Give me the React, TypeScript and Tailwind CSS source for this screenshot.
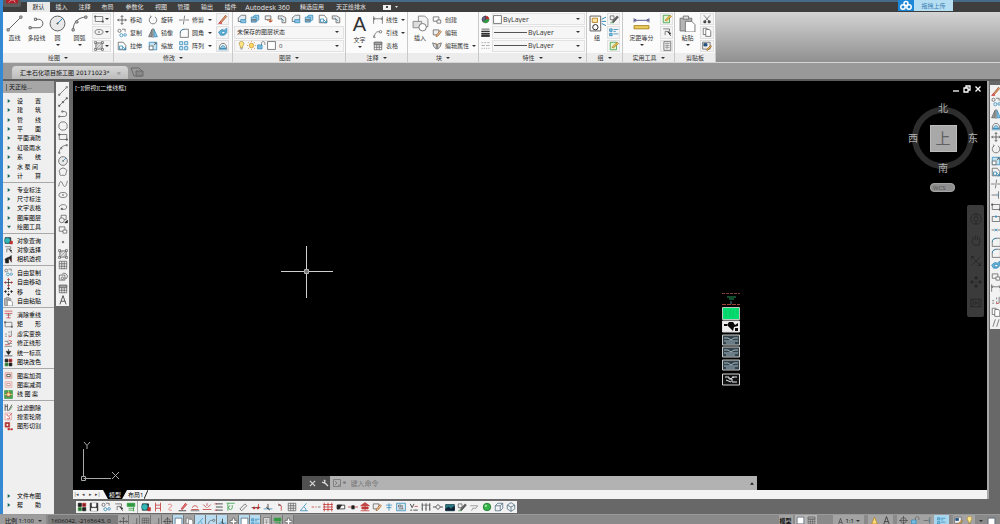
import React from "react";

const K = "#5c5c5c";
const B = "#2b87b8";
const R = "#c22f2f";
const G = "#2f9a3f";
const D = "#1f1f1f";

type Stroke = [d: string, stroke: string, fill?: string];

const ICONS: Record<string, Stroke[]> = {
  line: [["M2 14 14 2", K], ["M1 13h2v2H1zM13 1h2v2h-2z", K, "#fff"]],
  xline: [["M2 14 14 2", K], ["M1 13h2v2H1zM7 7h2v2H7zM13 1h2v2h-2z", K, K]],
  pline: [["M1 12h9a4 4 0 0 0 0-8H8", K], ["M1 11h2v2H1zM6 3h2v2H6z", K, "#fff"]],
  polygon: [["M5 1.500h6L14.500 5v6L11 14.500H5L1.500 11V5z", K]],
  circle: [["M8 1a7 7 0 1 0 0 14A7 7 0 1 0 8 1", K, "#e9e9e9"], ["M8 8l5-5", B], ["M7.500 7.500h1v1h-1z", K, K]],
  arc: [["M2 14C2 6 8 2 14 2", K], ["M1 13h2v2H1zM4.500 5.500h2v2h-2zM13 1h2v2h-2z", K, "#fff"]],
  rect: [["M2 4h12v8H2z", K], ["M1 3h2v2H1zM13 11h2v2h-2z", K, K]],
  cloud: [["M4 3q4-3 8 0 4 3 1 6 0 6-5 4-6 2-5-3-3-4 1-7z", K]],
  spline: [["M1 12C4-3 7 7 8 9s4 8 7-6", K]],
  ellipse: [["M8 4a6.500 4 0 1 0 0 8 6.500 4 0 1 0 0-8", K], ["M7.500 7.500h1v1h-1z", K, K]],
  earc: [["M2 8c1-5 12-5 12 0 0 4-6 5-8 3", K], ["M5 10h2v2H5z", K, K]],
  block: [["M5 2h8v7H5z", K], ["M6 6a4 4 0 1 0 0 8 4 4 0 1 0 0-8", K, "#eee"], ["M11 14h4v-4z", D, D]],
  mkblock: [["M2 3h9v7H2z", K], ["M8 8h6v5H8z", K, "#fff"]],
  point: [["M7 7h2v2H7z", K, K]],
  hatch: [["M3 3h10v10H3z", K, "#ddd"], ["M3 8l5-5M3 13 13 3M8 13l5-5", "#999"], ["M1 1h3v3H1zM12 1h3v3h-3zM1 12h3v3H1zM12 12h3v3h-3z", K, "#fff"]],
  region: [["M2 5h9v8H2zM6 4a5 5 0 0 1 8 6h-3", K], ["M7 8a2 2 0 1 0 0 4 2 2 0 1 0 0-4", K]],
  table: [["M2 2h12v12H2zM2 6h12M6 6v8M10 6v8M2 10h12", K], ["M2 2h12v3H2z", K, "#bbb"]],
  textA: [["M3 15 8 1l5 14M5 10h6", D]],
  move: [["M8 1v14M1 8h14M6 3l2-2 2 2M6 13l2 2 2-2M3 6 1 8l2 2M13 6l2 2-2 2", "#444"]],
  rotate: [["M5 3a6 6 0 1 0 6 0M5 3 4 1M5 3 3 4", K], ["M8 8h.5", B]],
  trim: [["M0 8h6M10 8h6M9 1 7 15", K]],
  copy: [["M4 2a2.500 2.500 0 1 0 0 5 2.500 2.500 0 1 0 0-5M8 2h5v4", K], ["M7 9a2.500 2.500 0 1 0 0 5 2.500 2.500 0 1 0 0-5M13 9a2 2 0 1 0 0 4 2 2 0 1 0 0-4", B]],
  mirror: [["M6.500 2v12H1z", K, "#999"], ["M9.500 2v12H15z", B, "#8cc5e3"], ["M8 0v16", K]],
  fillet: [["M2 15V8c0-4 3-6 7-6h6v13z", K], ["M2 8c0-4 3-6 7-6", B]],
  stretch: [["M2 2h8l4 5v7H2z", K], ["M4 8h5v5H4zM9 9l5 5M14 10v4h-4", B]],
  scale: [["M2 2h12v12H2z", B, "#c5e2f1"], ["M2 8h6v6H2z", K, "#fff"], ["M9 7l4-4M10 3h3v3", K]],
  array: [["M1 1h5v5H1zM9 1h5v5H9zM1 9h5v5H1zM9 9h5v5H9z", B, "#d4e9f4"]],
  erase: [["M3 13 12 2l2 2-9 10z", "#9a4c2d", "#e3a06a"], ["M1 15h5l-2-3z", R, "#e88"]],
  explode: [["M1 8l5-4 4 1 4-3v7l-4 4H4z", B, "#6db4da"], ["M6 7h5v4H6z", B, "#fff"]],
  offset: [["M2 12c0-11 12-11 12 0z", K], ["M4 12c1-6 7-6 8 0zM1 14h14", B, "#9dcde6"]],
  extend: [["M1 8h9M12 2v12", K], ["M10 6l2 2-2 2", B]],
  brk: [["M2 4h4M10 4h4v8H2V4", K], ["M7 3h2v2H7z", B, B]],
  join: [["M1 8h5M10 8h5", K], ["M6 6l2 2-2 2M10 6 8 8l2 2", B]],
  layer: [["M2 6l5-4h7v6l-5 4H2z", K, "#e3eef5"], ["M6 9h8v5H6z", B, "#8fc4e2"]],
  layer2: [["M2 5h8v8H2zM5 5l2-3h7v7l-3 3", B, "#9bcbe5"], ["M2 9h8M2 11h8", K]],
  layer3: [["M2 3h9v6H2z", K, "#eee"], ["M5 10h9M10 7v7", "#bc682b"], ["M8 12h5", R]],
  layer4: [["M2 3h7l5 3v8H8V8H2z", K, "#e8e8e8"], ["M6 6l5 5", B]],
  bulb: [["M8 1c-5 0-5 5-2 8v3h4V9c3-3 3-8-2-8z", "#a78832", "#ffe789"], ["M6 14h4", K]],
  sun: [["M8 4a4 4 0 1 0 0 8 4 4 0 1 0 0-8", "#c8902c", "#ffd866"], ["M8 0v2M8 14v2M0 8h2M14 8h2M2 2l2 2M12 12l2 2M14 2l-2 2M4 12l-2 2", "#c8902c"]],
  unlock: [["M1 7h8v7H1z", B, "#7cbbdd"], ["M8 7V4c0-4 6-4 6 0v3", K]],
  swatch: [["M1 1h14v14H1z", "#444", "#fff"]],
  dim: [["M1 2v12M15 2v12M1 6h14M3 4 1 6l2 2M13 4l2 2-2 2", K]],
  leader: [["M2 14C4 5 7 6 10 6", K], ["M12 4a2 2 0 1 0 0 4 2 2 0 1 0 0-4M1 12v3h3", K]],
  insert: [["M6 1h6l3 3v7H6z", "#888", "#f3f3f3"], ["M1 6h8v6H1z", "#888", "#ddd"], ["M10 8a3.500 3.500 0 1 0 0 7 3.500 3.500 0 1 0 0-7", "#777", "#fff"]],
  edit: [["M2 3h9v8H2z", K, "#eee"], ["M6 13l7-9 2 2-7 8z", "#96602f", "#ffd1a1"]],
  attr: [["M1 3l6 2v8L3 9zM15 3 9 5v8l4-4z", K, "#ddd"], ["M6 3l3 4", "#c47b31"]],
  wheel: [["M8 2a6 6 0 1 0 0 12A6 6 0 1 0 8 2", K, "#ddd"], ["M8 8V2a6 6 0 0 1 6 6z", R, R], ["M8 8h6a6 6 0 0 1-10 4z", G, G], ["M8 8 3 11A6 6 0 0 1 8 2z", "#335", "#668"]],
  weight: [["M1 2h14", D], ["M1 5.500h14v1H1z", D, D], ["M1 9.500h14v1.500H1zM1 13h14v2H1z", D, D]],
  ltype: [["M1 3h3M6 3h3M11 3h4M1 8h6M9 8h6M1 13h2M5 13h2M9 13h2M13 13h2", "#888"]],
  group: [["M1 1h10v14H1z", K, "#fff"], ["M3 3h5v4H3z", "#b7862f", "#ffe5a0"], ["M6 9a2.500 2.500 0 1 0 0 5 2.500 2.500 0 1 0 0-5", D], ["M12 4l4-2M12 8l4 2M12 6h4", B]],
  pen: [["M2 3h6v6H2z", K], ["M5 12 13 3l2 2-8 9z", K, K], ["M2 14h5", G]],
  list: [["M1 3h4v4H1zM1 10h4v4H1z", B, "#8ec6e4"], ["M7 4h8M7 7h4M7 11h8", B]],
  measure: [["M1 3v4M15 3v4M1 5h14M3 4 1 5l2 1M13 4l2 1-2 1", "#558"], ["M1 10h14v3H1z", "#aa8320", "#ecd05f"]],
  qsel: [["M2 2h10v12H2z", G, "#e6f3cf"], ["M5 10l8-8 2 2-8 7z", "#956b20", "#ffcf50"]],
  calc: [["M3 1h11v14H3z", K, "#eee"], ["M5 4h7M5 7h7M5 10h7M8 6v7", "#888"]],
  paste: [["M1 3h11v12H1z", "#777", "#b5b5b5"], ["M4 1h5v3H4z", "#777", "#ddd"], ["M6 6h6l3 3v7H6z", "#777", "#fff"]],
  cut: [["M3 2l8 9M13 2 5 11", K], ["M3 11h3v3H3zM10 11h3v3h-3z", D, "#777"]],
  pages: [["M2 2h6l2 2v8H2z", K, "#fff"], ["M6 4h6l2 3v8H6z", K, "#fff"]],
  props: [["M1 2h12v11H1z", K, "#eee"], ["M3 4h5v4H3z", "#24527d", "#24527d"], ["M7 14l7-7 1 2-6 6z", "#96602f", "#f0c050"]],
  globe: [["M2 3h10v10H2z", D, "#222"], ["M6 3a5 5 0 1 0 0 10A5 5 0 1 0 6 3", "#187c88", "#34b7b5"], ["M11 9h4v5h-4z", R, R]],
  select: [["M2 3h10v4H5v6", K], ["M9 8l5 2-2 1 2 3", D, D]],
  camera: [["M2 7l6-3v10H3zM8 5l5-4v12", D, D], ["M10 8l4 2", R]],
  redmove: [["M8 1v14M1 8h14", D], ["M6 3l2-2 2 2M6 13l2 2 2-2M3 6 1 8l2 2M13 6l2 2-2 2", R, R]],
  fourway: [["M8 1v4M8 11v4M1 8h4M11 8h4M7 8h2", D], ["M6 3l2-2 2 2zM6 13l2 2 2-2zM3 6 1 8l2 2zM13 6l2 2-2 2z", D, D]],
  tee: [["M1 2h14M1 6h14M8 6v8M4 14h8", R], ["M4 9h8", K]],
  dashes: [["M2 13h3M2 9h3M9 13v-3M9 7V4M13 13V3", K], ["M8 14l5-1", R]],
  zig: [["M1 4h6v4h7M1 13h13", K], ["M8 2l6 2-4 3M2 10h8", R]],
  level: [["M1 14h14M8 2v4", D], ["M4 6h8l-4 6z", D, D]],
  blocks: [["M2 2h5v5H2zM9 9h5v5H9z", D, D], ["M9 2h5v5H9z", R, "#722"], ["M2 9h5v5H2z", G, "#363"]],
  hole: [["M2 3h12v10H2z", "#d58a84", "#f4dcd6"], ["M5 6h6v4H5z", D, "#fff"]],
  unhole: [["M2 3h12v10H2z", "#d9a09a", "#f7e7e3"], ["M5 6h6v4H5z", "#b77", "#fff"]],
  pattern: [["M1 1h14v14H1z", G, "#4ca45a"], ["M5 5h6v6H5z", R, "#fff2aa"], ["M1 8h4M11 8h4M8 1v4", "#ffe56b"]],
  filter: [["M2 2v12M2 6h4M6 2v12M8 14l6-11", D], ["M10 13l5-7", G]],
  contour: [["M2 2h11v12H2z", "#d88", "#fff"], ["M4 5h3v3M10 9v3H5M14 2l-6 7", R]],
  shapecut: [["M2 1h8v8H2z", R, "#a33"], ["M5 4h2v2H5z", "#fff", "#fff"], ["M7 11h3v3H7zM12 12h3v2h-3z", R, R]],
  save: [["M2 2h12v12H2z", D, "#333"], ["M5 2h6v5H5zM4 10h8v4H4z", "#fff", "#fff"]],
  green: [["M2 2h12v5H2z", G, G], ["M4 10h9M4 13h9M12 8v7", G]],
  ladder: [["M4 1v14M12 1v14", R], ["M4 5h8M4 10h8", R]],
  hook: [["M5 4c7-2 7 3 3 5s-2 5 3 4", "#d66"]],
  slope: [["M5 11 12 2l2 2-7 8z", R, "#d77"], ["M1 14h12", D]],
  roof: [["M2 12h12M4 9c0-4 8-4 8 0", R], ["M1 14h14", K]],
  spread: [["M2 4l5 5M14 4 9 9", R], ["M1 12h14M8 2v4", R]],
  rows: [["M3 3h11M3 8h11M3 13h11", D], ["M1 3h4M1 13h4", R]],
  pipe: [["M1 2h13M3 2v12", G], ["M7 6a3 3 0 1 0 3 3M10 5v4", G]],
  tube: [["M3 11 11 3l3 3-8 8z", K, "#eee"]],
  nodes: [["M1 9h14", D], ["M4 8h2v3H4zM10 8h2v3h-2z", R, R], ["M12 3v6", R]],
  valve: [["M1 11h14", B], ["M5 8l6 5M8 3v8", D]],
  tap: [["M5 3l5 3v8", R], ["M5 5h4", D]],
  grid: [["M2 2h12v12H2zM2 6h12M2 10h12M6 2v12M10 2v12", K]],
  redgrid: [["M2 1v14M8 1v14M14 1v14", R], ["M0 4h16M0 8h16M0 12h16", R]],
  dotline: [["M1 8h4M7 8h2", R], ["M11 8h4", K]],
  half: [["M2 5h12v6H2z", D, "#fff"], ["M2 5h7l-4 6H2z", D, D]],
  center: [["M0 8h5M11 8h5", R], ["M6 6h4v5H6z", D, D]],
  house: [["M1 6 8 1l7 5zM3 8h10v3H3z", R, "#b84848"], ["M1 14h14M8 6v8", R]],
  pillar: [["M8 2v12M3 5h10M4 9h8", B]],
  room: [["M1 2h14v12H1z", B, "#dcebf4"], ["M4 5h4v3H4zM10 5v6M4 11h8", K]],
  ticks: [["M2 2v12M8 2v12M14 2v12", D], ["M1 11h2M7 11h2M13 11h2M1 5h14", K]],
  vdot: [["M2 3l3 6 3-6M2 13h3M7 13h7", D], ["M9 7h5", R]],
  diamond: [["M0 8h4M12 8h4M8 4l4 4-4 4-4-4z", D]],
  steps: [["M2 6h12l-3 4H6L4 14", "#888"]],
  photo: [["M1 4h14v10H1z", "#1a4148", "#2a7a86"], ["M1 11l5-3 3 3 6-4v6H1z", "#123", "#123"]],
  ball: [["M8 2a6 6 0 1 0 0 12A6 6 0 1 0 8 2", "#166f25", "#35b44a"], ["M5 5h2v2H5z", "#aef2b8", "#aef2b8"]],
  cube: [["M2 6l4-4h8v8l-4 4H2zM2 6h8v8M10 6l4-4", "#45687c"]],
  hex: [["M8 1l6 4v6l-6 4-6-4V5zM8 15V8L2 5M8 8l6-3", "#45687c"]],
  slashes: [["M3 14 7 2M9 14l4-12", K]],
  plus: [["M6 2h4v4h4v4h-4v4H6v-4H2V6h4z", "#555", "#fff"]],
  ell: [["M12 2v11H4", "#444"]],
  angle: [["M2 14 12 2M2 14h12M8 8c3 2 3 4 3 6", B]],
  target: [["M8 3a5 5 0 1 0 0 10A5 5 0 1 0 8 3M8 0v16M0 8h16", "#444"]],
  box: [["M2 2h12v12H2z", "#456", "#fff"]],
  flame: [["M8 2l5 12H3z", "#b77c22", "#ffdf79"]],
  hand: [["M4 8V4M7 8V2M10 8V3M13 9V5M4 8l-2 2 4 5h6l1-6", D]],
  wheelnav: [["M8 1a7 7 0 1 0 0 14A7 7 0 1 0 8 1M8 5a3 3 0 1 0 0 6 3 3 0 1 0 0-6M8 1v4M8 11v4", D]],
  zoomx: [["M2 2l12 12M14 2 2 14M2 6V2h4M14 10v4h-4", D]],
  film: [["M1 3h14v10H1zM4 3v10M12 3v10M7 6l3 2-3 2z", D]],
};

function Icon({ n, c = "size-3", w = 1.2 }: { n: string; c?: string; w?: number }) {
  return (
    <svg viewBox="0 0 16 16" className={`shrink-0 ${c}`} fill="none" strokeWidth={w} aria-hidden="true">
      {ICONS[n].map(([d, s, f], i) => (
        <path key={i} d={d} stroke={s} fill={f ?? "none"} />
      ))}
    </svg>
  );
}

function Caret({ c = "" }: { c?: string }) {
  return (
    <svg viewBox="0 0 4 2" className={`h-[2px] w-1 shrink-0 ${c}`} aria-hidden="true">
      <path d="M0 0h4L2 2z" fill="#333" />
    </svg>
  );
}

function Panel({ title, w, caret = true, corner = false, children }: { title: string; w: string; caret?: boolean; corner?: boolean; children: React.ReactNode }) {
  return (
    <section className={`flex shrink-0 flex-col border-r border-[#c9c9c9] bg-[#fbfbfb] ${w}`}>
      <div className="flex flex-1 items-stretch py-px">{children}</div>
      <h2 className="relative flex h-[9px] items-center justify-center gap-1 bg-[#ececec] text-[6px] leading-none text-[#333]">
        {title}
        {caret && <Caret />}
        {corner && <span className="absolute right-1"><Caret /></span>}
      </h2>
    </section>
  );
}

function Big({ n, label, w, size = "size-[17px]", caret = false }: { n: string; label: string; w: string; size?: string; caret?: boolean }) {
  return (
    <button className={`flex shrink-0 flex-col items-center pt-0.5 ${w}`}>
      <Icon n={n} c={size} w={0.9} />
      <span className="mt-0.5 text-[6px] leading-[8px]">{label}</span>
      {caret && <Caret c="mt-0.5" />}
    </button>
  );
}

function Col({ items, w, carets = [] }: { items: [string, string][]; w: string; carets?: number[] }) {
  return (
    <div className={`grid shrink-0 grid-rows-3 ${w}`}>
      {items.map(([n, t], i) => (
        <button key={n + t} aria-label={t || n} className="flex items-center gap-[3px] text-[6px] leading-none">
          <Icon n={n} c="size-[10px]" />
          {t && <span className="whitespace-nowrap">{t}</span>}
          {carets.includes(i) && <Caret c="ml-auto" />}
        </button>
      ))}
    </div>
  );
}

function Boxes({ items, w }: { items: string[]; w: string }) {
  return (
    <div className={`grid shrink-0 grid-rows-3 gap-px ${w}`}>
      {items.map((n) => (
        <button key={n} aria-label={n} className="flex items-center justify-center border border-[#e0e0e0] bg-[#f4f4f4]">
          <Icon n={n} c="size-[10px]" />
        </button>
      ))}
    </div>
  );
}

function Combo({ label, value, pad = "pl-1", text = "text-[6px]" }: { label: string; value: string; pad?: string; text?: string }) {
  return (
    <div className="relative flex min-w-0 flex-1 items-center self-stretch">
      <select aria-label={label} className={`h-full w-full appearance-none leading-none outline-none ${text} ${pad}`}>
        <option>{value}</option>
      </select>
      <Caret c="pointer-events-none absolute right-1" />
    </div>
  );
}

const MENU = ["默认", "插入", "注释", "布局", "参数化", "视图", "管理", "输出", "插件", "Autodesk 360", "精选应用", "天正给排水"];
const MENU_W = ["w-[23px]", "w-[23px]", "w-[23px]", "w-[23px]", "w-[31px]", "w-[22px]", "w-[23px]", "w-[24px]", "w-[23px]", "w-[51px]", "w-[38px]", "w-[40px]"];

type Row = [icon: string, text: string];
const GROUPS: { h: string; rows: Row[] }[] = [
  { h: "h-[85px]", rows: [["", "设　　置"], ["", "建　　筑"], ["", "管　　线"], ["", "平　　面"], ["", "平面消防"], ["", "虹吸雨水"], ["", "系　　统"], ["", "水 泵 间"], ["", "计　　算"]] },
  { h: "h-[47px]", rows: [["", "专业标注"], ["", "尺寸标注"], ["", "文字表格"], ["", "图库图层"], ["open", "绘图工具"]] },
  { h: "h-[28px]", rows: [["globe", "对象查询"], ["select", "对象选择"], ["camera", "相机透视"]] },
  { h: "h-[38px]", rows: [["copy", "自由复制"], ["redmove", "自由移动"], ["fourway", "移　　位"], ["paste", "自由粘贴"]] },
  { h: "h-[57px]", rows: [["tee", "消除重线"], ["rect", "矩　　形"], ["dashes", "虚实变换"], ["zig", "修正线形"], ["level", "统一标高"], ["blocks", "图块改色"]] },
  { h: "h-[28px]", rows: [["hole", "图案加洞"], ["unhole", "图案减洞"], ["pattern", "线 图 案"]] },
  { h: "h-[28px]", rows: [["filter", "过滤删除"], ["contour", "搜索轮廓"], ["shapecut", "图形切割"]] },
];

function SideRow({ n, t }: { n: string; t: string }) {
  return (
    <button className="flex items-center text-left">
      <span className="flex w-[14px] shrink-0 items-center pl-px">
        {n === "" || n === "open" ? (
          <svg viewBox="0 0 6 6" className="ml-[3px] size-1" aria-hidden="true">
            <path d={n ? "M0 1h6L3 5z" : "M1 0v6l4-3z"} fill="#17685f" />
          </svg>
        ) : (
          <Icon n={n} c="size-[9px]" />
        )}
      </span>
      <span className="whitespace-pre text-[6px] leading-none text-black">{t}</span>
    </button>
  );
}

const LEFT_TOOLS = ["line", "xline", "pline", "polygon", "rect", "arc", "circle", "cloud", "spline", "ellipse", "earc", "block", "mkblock", "point", "hatch", "grid", "region", "table", "textA"];
const RIGHT_TOOLS = ["erase", "copy", "mirror", "offset", "move", "rotate", "scale", "stretch", "trim", "extend", "rect", "brk", "join", "fillet", "fillet", "explode", "mkblock", "dim", "dashes", "pages", "slashes"];
const BOTTOM_A = ["blocks", "save", "copy", "select", "green"];
const BOTTOM_B = ["globe", "ladder", "hook", "slope", "roof", "spread", "rows", "pipe", "tube", "nodes", "valve", "tap", "grid", "angle", "dotline", "redgrid", "half", "center", "house", "edit", "pillar", "room", "vdot", "ticks", "diamond", "photo", "pen", "steps", "ball", "cube", "hex"];
const STATUS: [string, boolean][] = [["move", false], ["ell", false], ["grid", false], ["ell", false], ["target", false], ["box", true], ["pages", false], ["angle", true], ["leader", true], ["valve", true], ["plus", false], ["box", true], ["list", true], ["calc", false], ["green", false], ["plus", false]];

function Ribbon() {
  return (
    <div className="flex h-[51px] shrink-0 overflow-hidden border-b border-[#d6d6d6] bg-linear-to-b from-[#d4d4d4] to-[#909090] text-[#333]">
      <Panel title="绘图" w="w-[111px]">
        <Big n="line" label="直线" w="w-[23px]" />
        <Big n="pline" label="多段线" w="w-[21px]" />
        <Big n="circle" label="圆" w="w-[21px]" caret />
        <Big n="arc" label="圆弧" w="w-[23px]" caret />
        <div className="ml-px grid w-[19px] grid-rows-3 gap-px">
          {["rect", "ellipse", "hatch"].map((n) => (
            <button key={n} aria-label={n} className="flex items-center justify-between border border-[#e0e0e0] bg-[#f4f4f4] px-px">
              <Icon n={n} c="size-[10px]" />
              <Caret />
            </button>
          ))}
        </div>
      </Panel>
      <Panel title="修改" w="w-[119px]">
        <Col w="ml-[3px] w-[31px]" items={[["move", "移动"], ["copy", "复制"], ["stretch", "拉伸"]]} />
        <Col w="w-[31px]" items={[["rotate", "旋转"], ["mirror", "镜像"], ["scale", "缩放"]]} />
        <Col w="w-[33px]" carets={[0, 1, 2]} items={[["trim", "修剪"], ["fillet", "圆角"], ["array", "阵列"]]} />
        <Boxes w="ml-1 w-[13px]" items={["erase", "explode", "offset"]} />
      </Panel>
      <Panel title="图层" w="w-[113px]">
        <div className="mx-px grid flex-1 grid-rows-3 gap-px">
          <div className="flex items-center justify-between px-[3px]">
            {["layer", "layer2", "layer3", "layer4", "layer", "layer2", "stretch", "layer4"].map((n, i) => (
              <button key={i} aria-label={`layer tool ${i + 1}`}><Icon n={n} c="size-[10px]" /></button>
            ))}
          </div>
          <div className="flex border border-[#e2e2e2] bg-[#f6f6f6]"><Combo label="图层状态" value="未保存的图层状态" pad="pl-[2px]" /></div>
          <div className="flex items-center gap-px border border-[#e2e2e2] bg-[#f6f6f6] pl-[2px]">
            <Icon n="bulb" c="size-[9px]" /><Icon n="sun" c="size-[9px]" /><Icon n="unlock" c="size-[9px]" /><Icon n="swatch" c="size-[9px]" />
            <Combo label="图层" value="0" pad="pl-[2px]" />
          </div>
        </div>
      </Panel>
      <Panel title="注释" w="w-[62px]">
        <button className="flex w-[27px] shrink-0 flex-col items-center">
          <span className="font-['Liberation_Sans',sans-serif] text-[20px] leading-[23px]">A</span>
          <span className="text-[6px] leading-[8px]">文字</span>
          <Caret c="mt-0.5" />
        </button>
        <Col w="w-[31px]" carets={[0, 1]} items={[["dim", "线性"], ["leader", "引线"], ["table", "表格"]]} />
      </Panel>
      <Panel title="块" w="w-[71px]">
        <Big n="insert" label="插入" w="w-[24px]" />
        <Col w="w-[43px]" carets={[2]} items={[["mkblock", "创建"], ["edit", "编辑"], ["attr", "编辑属性"]]} />
      </Panel>
      <Panel title="特性" w="w-[108px]" corner>
        <div className="grid flex-1 grid-rows-3 gap-px px-px">
          <div className="flex items-center gap-0.5 pl-px">
            <Icon n="wheel" c="size-[9px]" />
            <div className="flex flex-1 items-center self-stretch border border-[#e2e2e2] bg-[#f6f6f6]"><Icon n="swatch" c="size-[9px]" /><Combo label="颜色" value="ByLayer" pad="pl-px" text="text-[7px]" /></div>
          </div>
          {["weight", "ltype"].map((n) => (
            <div key={n} className="flex items-center gap-0.5 pl-px">
              <Icon n={n} c="size-[9px]" />
              <div className="flex flex-1 items-center self-stretch border border-[#e2e2e2] bg-[#f6f6f6]"><span className="ml-px h-px w-[33px] bg-[#555]" /><Combo label={n} value="ByLayer" pad="pl-px" text="text-[7px]" /></div>
            </div>
          ))}
        </div>
      </Panel>
      <Panel title="组" w="w-[36px]">
        <Big n="group" label="组" w="w-[20px]" />
        <Boxes w="w-[13px]" items={["pen", "list", "qsel"]} />
      </Panel>
      <Panel title="实用工具" w="w-[52px]">
        <Big n="measure" label="定距等分" w="w-[37px]" caret />
        <Boxes w="w-[13px]" items={["qsel", "select", "calc"]} />
      </Panel>
      <Panel title="剪贴板" w="w-[41px]" caret={false}>
        <Big n="paste" label="粘贴" w="w-[25px]" caret />
        <Boxes w="w-[14px]" items={["cut", "pages", "props"]} />
      </Panel>
    </div>
  );
}

function ViewCube() {
  return (
    <div className="absolute top-[20px] right-[9px] grid h-[74px] w-[70px] place-items-center text-[10px] leading-none text-[#b0b0b0]">
      <div className="col-start-1 row-start-1 size-[62px] rounded-full border-[6px] border-[#2d2d2d]" />
      <button className="col-start-1 row-start-1 grid size-[27px] place-items-center border border-[#bcbcbc] bg-[#a8a8a8] text-[15px] leading-none text-[#606060]">上</button>
      <span className="col-start-1 row-start-1 self-start pt-0.5">北</span>
      <span className="col-start-1 row-start-1 self-end pb-0.5">南</span>
      <span className="col-start-1 row-start-1 justify-self-start">西</span>
      <span className="col-start-1 row-start-1 justify-self-end">东</span>
    </div>
  );
}

function Sheets() {
  return (
    <svg viewBox="0 0 20 96" className="absolute top-[211px] left-[648px] h-[96px] w-5" aria-label="sheets">
      <path d="M1 1.500h18" stroke="#803c35" strokeDasharray="3 1" />
      <path d="M6 5h9M8 7h5" stroke="#24985a" />
      <path d="M10 9v3" stroke="#4b7a91" />
      <path d="M1 12.500h18" stroke="#a34134" strokeDasharray="4 1" />
      <path d="M1.500 15.500h17v12h-17z" fill="#02dd72" stroke="#b9c7bd" />
      <path d="M5 18v7M9 17v8M12 19v6M16 17v5" stroke="#11c35d" />
      <path d="M1.500 29h17v11h-17z" fill="#eee" stroke="#ddd" />
      <path d="M8 30h4l2 3 3-2v3l-4 1-1 4-3-3-3-3zM3 32h3v2H3zM14 36h3v3h-3z" fill="#080808" />
      {[43, 55, 68].map((y) => (
        <g key={y}>
          <path d={`M1.500 ${y}h17v10h-17z`} fill="#34424a" stroke="#c9cccc" />
          <path d={`M3 ${y + 3}h4l3 2 3-2h4M3 ${y + 6}h14M5 ${y + 8}h9`} stroke="#a2b9c5" fill="none" />
        </g>
      ))}
      <path d="M1.500 82h17v11h-17z" fill="#111" stroke="#d5d5d5" />
      <path d="M4 85h4v2h3v3h5M5 88l5 2M11 85h5M9 87l4-2" stroke="#e2e9ec" fill="none" />
    </svg>
  );
}

function Canvas() {
  return (
    <main className="relative min-h-0 flex-1 overflow-hidden bg-black">
      <p className="absolute top-[3px] left-[2px] text-[6px] leading-[9px] whitespace-nowrap text-[#e6e6e6]">[−][俯视][二维线框]</p>
      <div className="absolute top-1 right-[5px] flex gap-[3px]">
        {["M1 6h6", "M1 3h4v4H1zM3 3V1h4v4H5", "M1.500 1.500l5 5M6.500 1.500l-5 5"].map((d, i) => (
          <button key={d} aria-label={["最小化", "还原", "关闭"][i]}>
            <svg viewBox="0 0 8 8" className="size-2" fill="none" stroke="#fff" strokeWidth="1.3"><path d={d} /></svg>
          </button>
        ))}
      </div>
      <svg viewBox="0 0 52 52" className="absolute top-[165px] left-[208px] size-[52px]" aria-hidden="true">
        <path d="M0 25.500h52M25.500 0v52" stroke="#d0d0d0" />
        <path d="M23.500 23.500h4v4h-4z" stroke="#b0b0b0" fill="#777" />
      </svg>
      <Sheets />
      <ViewCube />
      <button className="absolute top-[102px] right-[32px] flex h-[9px] w-[25px] items-center rounded-sm border border-[#a4a4a4] bg-[#8f8f8f] px-[2px] text-[6px] leading-none text-[#505050]">WCS</button>
      <nav aria-label="导航" className="absolute top-[124px] right-[3px] flex h-[112px] w-[17px] flex-col items-center justify-around rounded-xs bg-[#3b3b3b] py-1">
        {["wheelnav", "hand", "zoomx", "fourway", "film"].map((n) => (
          <button key={n} aria-label={n} className="opacity-80"><Icon n={n} c="size-[12px]" w={1} /></button>
        ))}
      </nav>
      <svg viewBox="0 0 44 44" className="absolute bottom-[5px] left-[6px] size-[44px]" fill="none" stroke="#a9a9a9" aria-label="UCS">
        <path d="M4.500 8v27M4.500 37.500H32M2.500 35.500h4v4h-4z" />
        <path d="M5 1l3 3.500L11 1M8 4.500V8M33 31l7 7M40 31l-7 7" />
      </svg>
      <form className="absolute bottom-0 left-1/4 flex h-[14px] w-[455px] items-center bg-[#b2b2b2]">
        <div className="flex h-full w-7 items-center justify-end gap-[5px] bg-[#505050] pr-px">
          <button type="button" aria-label="关闭"><svg viewBox="0 0 8 8" className="size-[7px]" stroke="#ddd" strokeWidth="1.300"><path d="M1 1l6 6M7 1 1 7" /></svg></button>
          <button type="button" aria-label="自定义"><svg viewBox="0 0 8 8" className="size-2" stroke="#ddd" strokeWidth="1.300" fill="none"><path d="M3 3l4 4M1 3l2 1 1-2-1-1" /></svg></button>
        </div>
        <svg viewBox="0 0 14 8" className="ml-[3px] h-2 w-[14px]" fill="none" stroke="#808080" aria-hidden="true"><path d="M.5.5h7v7h-7zM2 2l2 2-2 2M5 6h2" /><path d="M10 3h3l-1.500 2z" fill="#777" /></svg>
        <input aria-label="命令" placeholder="键入命令" className="ml-1 min-w-0 flex-1 text-[7px] leading-none outline-none placeholder:text-[#777]" />
        <svg viewBox="0 0 6 4" className="mr-[3px] h-[3px] w-1"><path d="M0 4h6L3 0z" fill="#222" /></svg>
      </form>
    </main>
  );
}

export default function App() {
  return (
    <div lang="zh-CN" className="flex h-screen flex-col overflow-hidden bg-[#686868] font-['Open_Sans','Noto_Sans_CJK_SC',sans-serif]">
      <div className="flex min-h-0 flex-1">
        <div className="w-[3px] shrink-0 bg-[#3489d2]" />
        <div className="flex min-w-0 flex-1 flex-col">
          <header className="relative flex h-3 shrink-0 border-t-2 border-[#466b86] bg-[#3e3e3e] pl-6 text-[6px] leading-none text-[#e4e4e4]">
            <button aria-label="应用程序菜单" className="absolute -top-0.5 left-0 flex h-[7px] w-[18px] justify-center rounded-b-xs bg-[#5b5b5b]">
              <svg viewBox="0 0 14 6" className="h-[5px] w-[14px]" aria-hidden="true"><path d="M0 0h14v4H0z" fill="#b51b25" /><path d="M3 3l3-3h3l2 3" stroke="#e6b3b6" fill="none" /></svg>
            </button>
            {MENU.map((m, i) => (
              <button key={m} className={`flex shrink-0 items-center justify-center whitespace-nowrap ${MENU_W[i]} ${i === 0 ? "bg-[#e9e9e9] text-[#222]" : ""} ${i === 9 ? "text-[7px]" : ""}`}>{m}</button>
            ))}
            <button aria-label="显示选项" className="ml-3 flex items-center gap-1">
              <svg viewBox="0 0 8 5" className="h-[5px] w-2"><path d="M0 0h8v5H0z" fill="#eee" /><path d="M3 1h2v2H3z" fill="#444" /></svg>
              <svg viewBox="0 0 6 4" className="h-[2px] w-[3px]"><path d="M0 0h6L3 4z" fill="#ddd" /></svg>
            </button>
            <button className="absolute -top-0.5 right-[47px] flex h-[11px] w-[55px] items-stretch bg-[#b5def3] text-[#3f7fb2]">
              <svg viewBox="0 0 16 11" className="h-full w-4 bg-[#1d87d8]" fill="none" stroke="#fff" strokeWidth="1.500" aria-hidden="true"><circle cx="8" cy="3.500" r="2" /><circle cx="5" cy="7" r="2.200" /><circle cx="11" cy="7" r="2.200" /></svg>
              <span className="flex flex-1 items-center justify-center">拖拽上传</span>
            </button>
          </header>
          <Ribbon />
          <div className="flex h-[18px] shrink-0 items-end border-b-2 border-[#5c5c5c] bg-[#999] pl-[9px]">
            <div className="flex h-[13px] w-[116px] items-center rounded-t-sm bg-linear-to-b from-[#d8d8d8] to-[#bcbcbc] pr-[7px] pl-2 text-[6px] leading-none text-[#111]">
              <span className="font-['DejaVu_Sans','Noto_Sans_CJK_SC',sans-serif] whitespace-nowrap">汇丰石化项目施工图 20171023*</span>
              <button aria-label="关闭" className="ml-auto text-[8px] leading-none text-[#888]">×</button>
            </div>
            <button aria-label="新建" className="mb-0.5 ml-0.5">
              <svg viewBox="0 0 14 10" className="h-[10px] w-[14px]" fill="#9b9b9b" stroke="#6b6b6b"><path d="M1 1h8l3 3v5H4z" /><path d="M6 4h7v5H6z" fill="#888" /></svg>
            </button>
          </div>

          <div className="flex min-h-0 flex-1">
            <aside className="flex w-[51px] shrink-0 flex-col bg-[#efefef]">
              <h2 className="flex h-3 shrink-0 items-center bg-[#a6a6a6] pl-[3px] text-[6px] leading-none text-[#111]">
                <span className="mr-0.5 h-[7px] w-px bg-[#666]" />天正绘...
              </h2>
              <div className="flex flex-1 flex-col pt-[3px]">
                {GROUPS.map((g, i) => (
                  <div key={i} className={`mb-0.5 flex shrink-0 flex-col ${i < GROUPS.length - 1 ? "border-b border-[#a9a9a9] pb-px" : ""}`}>
                    <div className={`grid auto-rows-fr ${g.h}`}>
                      {g.rows.map(([n, t]) => <SideRow key={t} n={n} t={t} />)}
                    </div>
                  </div>
                ))}
                <div className="mt-auto mb-1 grid h-[19px] auto-rows-fr">
                  <SideRow n="" t="文件布图" />
                  <SideRow n="" t="帮　　助" />
                </div>
              </div>
            </aside>

            <div className="flex min-w-0 flex-1 flex-col">
              <div className="flex min-h-0 flex-1">
                <div className="w-[19px] shrink-0 pt-px pl-[2px]">
                  <div className="w-[13px] bg-[#f2f2f2] pt-[3px]">
                    <div className="grid h-[221px] auto-rows-fr">
                      {LEFT_TOOLS.map((n) => (
                        <button key={n} aria-label={n} className="flex items-center justify-center"><Icon n={n} c="size-[10px]" /></button>
                      ))}
                    </div>
                  </div>
                </div>
                <div className="flex min-w-0 flex-1 flex-col border-r-2 border-[#a8a8a8]">
                  <Canvas />
                  <div className="flex h-[9px] shrink-0 items-center bg-[#f3f3f3] text-[6px] leading-none">
                    {["|◂", "◂", "▸", "▸|"].map((s) => (
                      <button key={s} className="w-[7px] text-center text-[5px] text-[#444]">{s}</button>
                    ))}
                    <svg viewBox="0 0 5 9" className="ml-0.5 h-full w-[5px]" aria-hidden="true"><path d="M0 0h5v9z" fill="#000" /></svg>
                    <button className="h-full bg-black px-px text-white">模型</button>
                    <svg viewBox="0 0 5 9" className="h-full w-[5px]" aria-hidden="true"><path d="M0 0h5L0 9z" fill="#000" /></svg>
                    <button className="pl-px">布局1</button>
                    <svg viewBox="0 0 4 9" className="ml-px h-full w-1" aria-hidden="true"><path d="M0 9 4 0" stroke="#222" /></svg>
                  </div>
                </div>
              </div>
              <div className="flex h-[15px] shrink-0 items-start pt-0.5 pl-[22px]">
                <div className="flex h-3 bg-[#f2f2f2]">
                  <div className="grid w-[62px] auto-cols-fr grid-flow-col border-r border-[#aaa]">
                    {BOTTOM_A.map((n) => <button key={n} aria-label={n} className="flex items-center justify-center"><Icon n={n} c="size-[10px]" /></button>)}
                  </div>
                  <div className="ml-0.5 grid w-[377px] auto-cols-fr grid-flow-col">
                    {BOTTOM_B.map((n) => <button key={n} aria-label={n} className="flex items-center justify-center"><Icon n={n} c="size-[10px]" /></button>)}
                  </div>
                </div>
              </div>
            </div>

            <div className="w-[11px] shrink-0 pt-1 pl-px">
              <div className="grid h-[244px] auto-rows-fr overflow-hidden bg-[#f2f2f2]">
                {RIGHT_TOOLS.map((n, i) => (
                  <button key={i} aria-label={n} className="flex items-center pl-px"><Icon n={n} c="size-[10px]" /></button>
                ))}
              </div>
            </div>
          </div>
        </div>
      </div>

      <footer className="flex h-[10px] shrink-0 items-start overflow-hidden border-t border-[#999] bg-[#8a8a8a] text-[6px] leading-[12px] text-[#111]">
        <button className="flex w-[46px] shrink-0 items-center gap-1 bg-[#9d9d9d] pl-[5px] whitespace-nowrap">比例 1:100 <Caret /></button>
        <span className="ml-0.5 w-[70px] shrink-0 bg-[#7d7d7d] pl-[3px] whitespace-nowrap">1606042, -2165643, 0</span>
        {STATUS.map(([n, on], i) => (
          <button key={i} aria-label={`status ${i + 1}`} className={`flex h-3 w-[11px] shrink-0 items-center justify-center border-r border-[#777] ${on ? "bg-[#b9dcf0]" : "bg-[#a6a6a6]"}`}>
            <Icon n={n} c="size-[9px]" />
          </button>
        ))}
        <div className="ml-auto flex items-start pr-1">
          <button className="bg-[#a3a3a3] px-px font-semibold">模型</button>
          <button aria-label="布局" className="ml-0.5 bg-[#b5b5b5] px-px pt-px"><Icon n="box" c="size-[9px]" /></button>
          <button aria-label="快速查看" className="bg-[#b5b5b5] px-px pt-px"><Icon n="table" c="size-[9px]" /></button>
          <button className="ml-4 flex items-center gap-0.5 bg-[#a3a3a3] px-1"><Icon n="textA" c="size-[7px]" />1:1<Caret /></button>
          <span className="ml-1 flex gap-[3px] bg-[#a3a3a3] px-0.5 pt-px"><Icon n="flame" c="size-[9px]" /><Icon n="textA" c="size-[9px]" /></span>
          <span className="ml-1 flex gap-[3px] bg-[#a3a3a3] px-0.5 pt-px"><Icon n="target" c="size-[9px]" /><Icon n="unlock" c="size-[9px]" /><Icon n="extend" c="size-[9px]" /></span>
          <span className="flex w-[15px] justify-center bg-[#a9d6ef] pt-px"><Icon n="list" c="size-[9px]" /></span>
          <span className="ml-1 flex gap-0.5 bg-[#a3a3a3] px-px pt-px"><Icon n="props" c="size-[9px]" /><Icon n="bulb" c="size-[9px]" /></span>
          <span className="ml-1 flex h-3 items-center gap-1"><Caret /><Icon n="box" c="size-[9px]" /></span>
        </div>
      </footer>
    </div>
  );
}
